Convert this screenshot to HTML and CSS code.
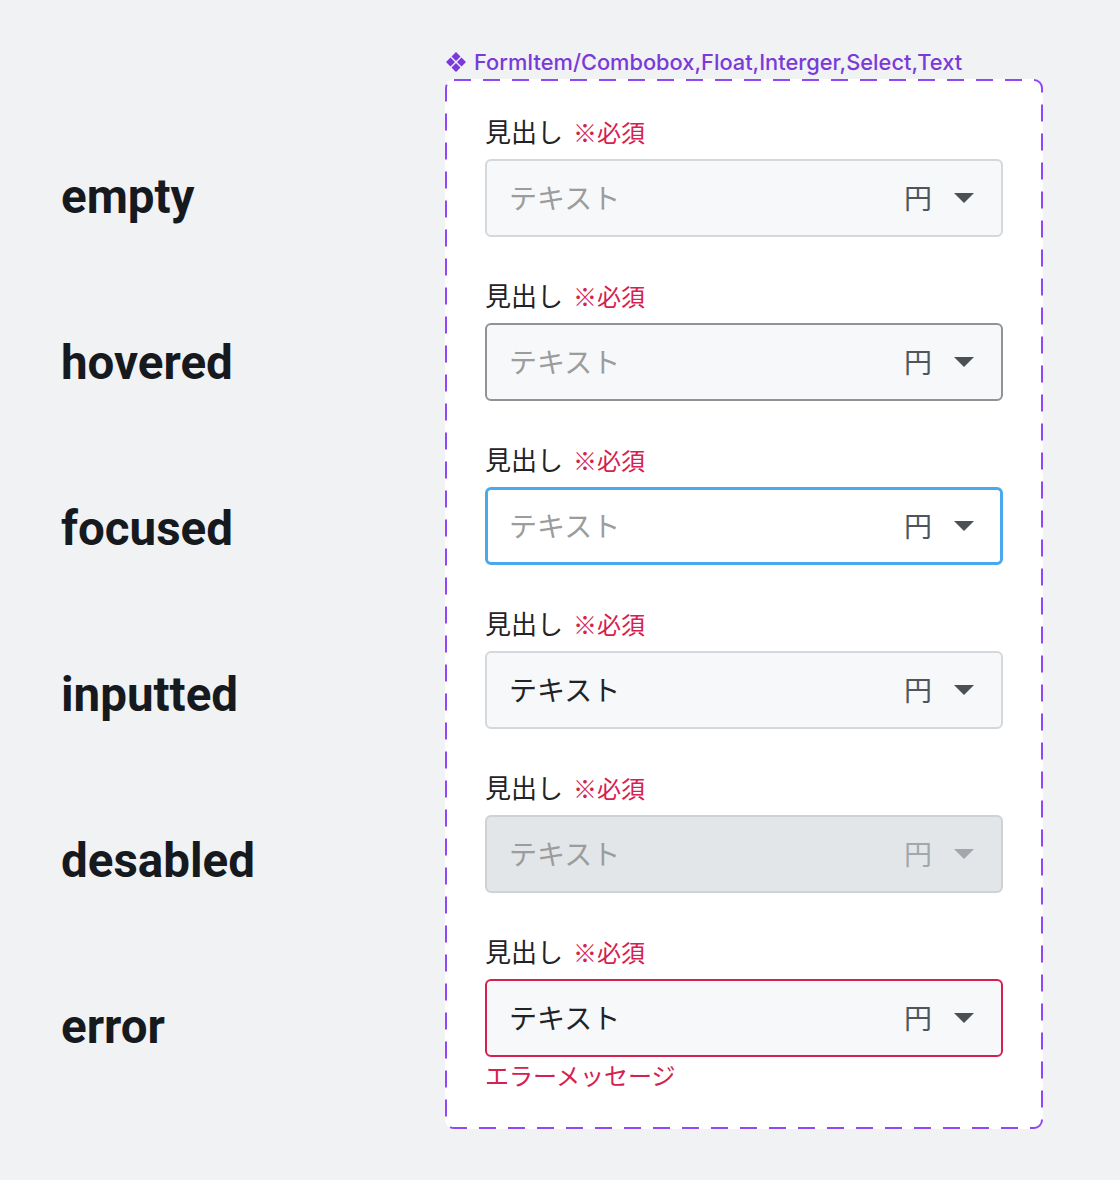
FILE: index.html
```html
<!DOCTYPE html>
<html lang="ja">
<head>
    <meta charset="UTF-8">
    <meta name="viewport" content="width=device-width, initial-scale=1.0">
    <title>FormItem States</title>
    <link rel="stylesheet" href="styles.css">
</head>
<body>
    <main class="page">
        <ul class="states">
            <li>empty</li>
            <li>hovered</li>
            <li>focused</li>
            <li>inputted</li>
            <li>desabled</li>
            <li>error</li>
        </ul>

        <section class="component">
            <div class="component-name">
                <svg class="component-icon" viewBox="0 0 20 20" aria-hidden="true">
                    <path d="M10 0 L14.5 4.5 L10 9 L5.5 4.5 Z M4.5 5.5 L9 10 L4.5 14.5 L0 10 Z M15.5 5.5 L20 10 L15.5 14.5 L11 10 Z M10 11 L14.5 15.5 L10 20 L5.5 15.5 Z"/>
                </svg>
                FormItem/Combobox,Float,Interger,Select,Text
            </div>

            <div class="frame">
                <svg class="frame-outline" aria-hidden="true">
                    <rect x="1" y="1" rx="8" ry="8"></rect>
                </svg>

                <div class="form-item">
                    <label class="form-label">見出し<span class="required">※必須</span></label>
                    <div class="field">
                        <span class="field-text placeholder">テキスト</span>
                        <span class="unit">円</span>
                        <span class="caret"></span>
                    </div>
                </div>

                <div class="form-item">
                    <label class="form-label">見出し<span class="required">※必須</span></label>
                    <div class="field is-hovered">
                        <span class="field-text placeholder">テキスト</span>
                        <span class="unit">円</span>
                        <span class="caret"></span>
                    </div>
                </div>

                <div class="form-item">
                    <label class="form-label">見出し<span class="required">※必須</span></label>
                    <div class="field is-focused">
                        <span class="field-text placeholder">テキスト</span>
                        <span class="unit">円</span>
                        <span class="caret"></span>
                    </div>
                </div>

                <div class="form-item">
                    <label class="form-label">見出し<span class="required">※必須</span></label>
                    <div class="field">
                        <span class="field-text">テキスト</span>
                        <span class="unit">円</span>
                        <span class="caret"></span>
                    </div>
                </div>

                <div class="form-item">
                    <label class="form-label">見出し<span class="required">※必須</span></label>
                    <div class="field is-disabled">
                        <span class="field-text placeholder">テキスト</span>
                        <span class="unit">円</span>
                        <span class="caret"></span>
                    </div>
                </div>

                <div class="form-item">
                    <label class="form-label">見出し<span class="required">※必須</span></label>
                    <div class="field is-error">
                        <span class="field-text">テキスト</span>
                        <span class="unit">円</span>
                        <span class="caret"></span>
                    </div>
                    <p class="error-message">エラーメッセージ</p>
                </div>
            </div>
        </section>
    </main>
</body>
</html>
```

FILE: styles.css
```css
body {
    margin: 0;
    background-color: #f1f2f4;
    font-family: "Noto Sans CJK JP", "Noto Sans", sans-serif;
    color: #1f2328;
}

.page {
    display: flex;
    padding: 48px 0 0 61px;
}

.states {
    list-style: none;
    margin: 66px 0 0;
    padding: 0;
    width: 384px;
}

.states li {
    display: flex;
    align-items: center;
    height: 166px;
    font-family: Roboto, "Liberation Sans", sans-serif;
    font-weight: 700;
    font-size: 47.5px;
    color: #161a1e;
}

.component-name {
    display: flex;
    align-items: center;
    gap: 8px;
    height: 28px;
    margin-bottom: 3px;
    font-family: Inter, "Liberation Sans", sans-serif;
    font-weight: 500;
    font-size: 21.8px;
    color: #7a3ad9;
}

.component-icon {
    width: 20px;
    height: 20px;
    margin-left: 1px;
    fill: #7a3ad9;
}

.frame {
    position: relative;
    width: 598px;
    box-sizing: border-box;
    padding: 38px 40px;
    background-color: #fff;
    border-radius: 9px;
    display: flex;
    flex-direction: column;
    gap: 44px;
}

.frame-outline {
    position: absolute;
    inset: 0;
    width: 100%;
    height: 100%;
    pointer-events: none;
}

.frame-outline rect {
    width: calc(100% - 2px);
    height: calc(100% - 2px);
    fill: none;
    stroke: #9047f7;
    stroke-width: 2;
    stroke-dasharray: 17 12;
}

.form-label {
    display: block;
    height: 28px;
    line-height: 28px;
    margin-bottom: 14px;
    font-size: 26px;
    color: #1f2328;
}

.required {
    margin-left: 10px;
    font-size: 24px;
    color: #d6204f;
}

.field {
    display: flex;
    align-items: center;
    height: 78px;
    box-sizing: border-box;
    padding: 0 27px 2px 22px;
    background-color: #f7f8fa;
    border: 2px solid #d4d7db;
    border-radius: 6px;
}

.field-text {
    flex-grow: 1;
    font-size: 28px;
    color: #1f2328;
}

.field-text.placeholder {
    color: #9c9c9c;
}

.unit {
    font-size: 28px;
    color: #4f555b;
    margin-right: 22px;
}

.caret {
    width: 0;
    height: 0;
    margin-top: 2px;
    border-left: 10px solid transparent;
    border-right: 10px solid transparent;
    border-top: 10px solid #4b5055;
}

.field.is-hovered {
    border-color: #8f9398;
}

.field.is-focused {
    background-color: #fff;
    border: 3px solid #4aa9ee;
    padding-left: 21px;
    padding-right: 26px;
}

.field.is-disabled {
    background-color: #e3e6e8;
    border-color: #cfd2d5;
}

.field.is-disabled .unit {
    color: #a3a7ab;
}

.field.is-disabled .caret {
    border-top-color: #a3a7ab;
}

.field.is-error {
    border-color: #d6204f;
}

.error-message {
    margin: 2px 0 0;
    line-height: 32px;
    font-size: 24px;
    color: #d6204f;
}
```
